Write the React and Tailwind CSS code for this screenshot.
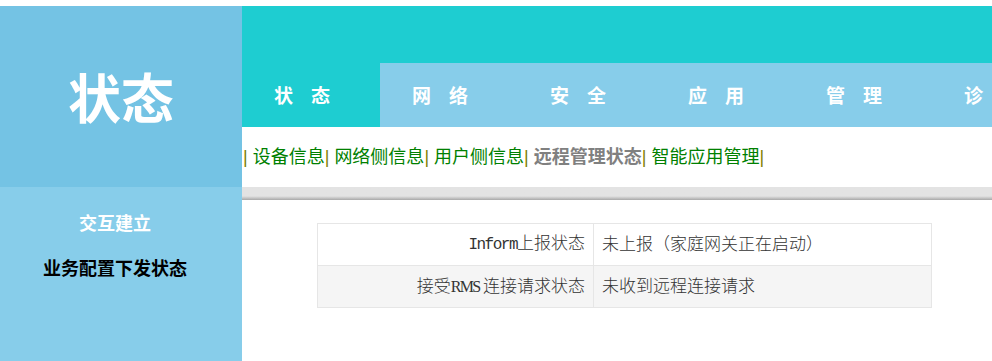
import React from 'react';

const tabs = ['状态', '网络', '安全', '应用', '管理', '诊断'];
const subLinks = ['设备信息', '网络侧信息', '用户侧信息', '远程管理状态', '智能应用管理'];

// latin parts: narrow half-width glyphs like the original page font
const Mono = ({ children }) => (
  <span className="text-[16px] tracking-[-1.5px]" style={{ fontFamily: '"Liberation Mono", monospace' }}>
    {children}
  </span>
);
const Narrow = ({ children }) => (
  <span className="text-[16px] tracking-[-1.8px]" style={{ fontFamily: '"Liberation Serif", serif' }}>
    {children}
  </span>
);

const rows = [
  [<><Mono>Inform</Mono>上报状态</>, '未上报（家庭网关正在启动）'],
  [<>接受<Narrow>RMS</Narrow> 连接请求状态</>, '未收到远程连接请求'],
];

const App = () => {
  return (
    <div
      className="w-[992px] h-[361px] overflow-hidden bg-white pt-[6px]"
      style={{ fontFamily: '"Liberation Sans", "Noto Sans CJK SC", sans-serif' }}
    >
      <div className="flex h-[181px]">
        {/* big title */}
        <div className="w-[242px] shrink-0 bg-[#74c3e4] flex items-center justify-center">
          <span className="text-white font-bold text-[53px] leading-none mt-[8px]">状态</span>
        </div>

        <div className="flex-1 flex flex-col min-w-0">
          <div className="h-[57px] bg-[#1ecdd1]" />
          <div className="h-[64px] flex bg-[#87cdea] overflow-hidden">
            {tabs.map((t, i) => (
              <div
                key={t}
                className={`w-[138px] shrink-0 flex items-center justify-center pt-[4px] ${i === 0 ? 'bg-[#1ecdd1]' : ''}`}
              >
                <span className="text-white font-bold text-[19px] tracking-[18px]">{t}</span>
              </div>
            ))}
          </div>
          <div className="h-[60px] flex items-center pl-[1px] pt-[1px] text-[18px] whitespace-nowrap">
            <span className="text-[#808000]">|</span>
            {subLinks.map((l, i) => (
              <React.Fragment key={l}>
                <span className={`ml-[5px] ${i === 3 ? 'text-[#808080] font-bold' : 'text-[#008000]'}`}>{l}</span>
                <span className="text-[#808000]">|</span>
              </React.Fragment>
            ))}
          </div>
        </div>
      </div>

      <div className="flex h-[174px]">
        {/* left menu */}
        <div className="w-[242px] shrink-0 bg-[#87cdea] flex flex-col items-center pt-[25px] pr-[12px]">
          <span className="text-white font-bold text-[18px] leading-[24px]">交互建立</span>
          <span className="text-black font-bold text-[18px] leading-[24px] mt-[21px]">业务配置下发状态</span>
        </div>

        <div className="flex-1 flex flex-col">
          <div className="h-[13px] bg-gradient-to-b from-[#e3e3e3] via-[#e3e3e3] via-70% to-[#a8a8a8]" />
          <div className="pl-[75px] pt-[23px]">
            <table
              className="w-[615px] border-collapse text-[17px] text-[#333]"
              style={{ fontFamily: '"Noto Sans CJK SC", sans-serif' }}
            >
              <tbody>
                {rows.map((r, i) => (
                  <tr key={i} className={`h-[42px] ${i === 1 ? 'bg-[#f5f5f5]' : ''}`}>
                    <td className="w-[276px] border border-[#e6e6e6] text-right pr-[8px] pb-[3px] font-light">{r[0]}</td>
                    <td className="border border-[#e6e6e6] pl-[8px] pb-[3px] font-light">{r[1]}</td>
                  </tr>
                ))}
              </tbody>
            </table>
          </div>
        </div>
      </div>
    </div>
  );
};

export default App;
